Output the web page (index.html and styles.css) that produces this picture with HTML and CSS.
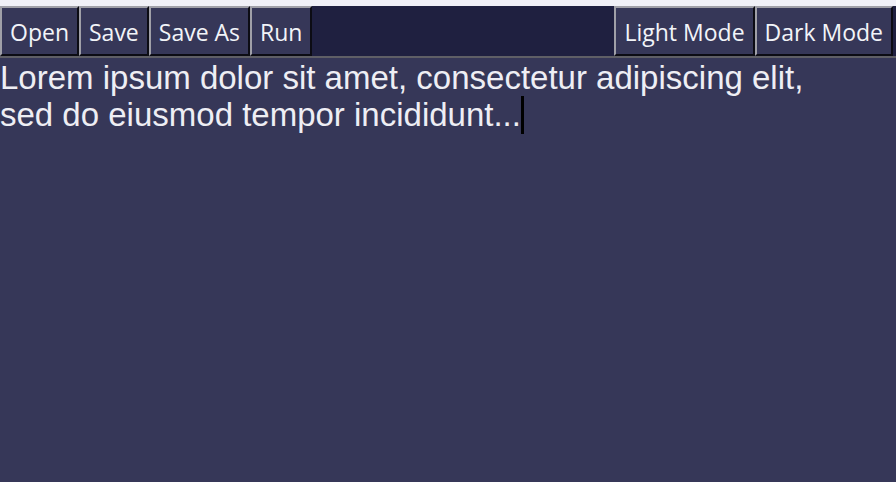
FILE: index.html
```html
<!DOCTYPE html>
<html>
<head>
<meta charset="utf-8">
<link rel="stylesheet" href="styles.css">
</head>
<body>
<div class="topstrip"></div>
<div class="toolbar">
  <button class="btn">Open</button>
  <button class="btn">Save</button>
  <button class="btn">Save As</button>
  <button class="btn">Run</button>
  <div class="spacer"></div>
  <button class="btn">Light Mode</button>
  <button class="btn">Dark Mode</button>
</div>
<div class="editor">
  <div class="line">Lorem ipsum dolor sit amet, consectetur adipiscing elit,</div>
  <div class="line">sed do eiusmod tempor incididunt...<span class="caret"></span></div>
</div>
</body>
</html>
```
FILE: styles.css
```css
html, body {
  margin: 0;
  padding: 0;
  background: #363758;
  height: 100%;
  overflow: hidden;
}
.topstrip {
  height: 6px;
  background: #f0f0f7;
}
.toolbar {
  display: flex;
  background: #1f2040;
  padding-right: 3px;
  border-bottom: 2px solid #5f5f66;
}
.spacer {
  flex: 1;
}
.btn {
  margin: 0;
  height: 50px;
  padding: 2px 8px 0 8px;
  background: #363758;
  color: #f2f4f8;
  font-family: "Open Sans", "Noto Sans", sans-serif;
  font-size: 23px;
  border-style: solid;
  border-width: 2px;
  border-color: #a0a0a8 #0c0c14 #0c0c14 #a0a0a8;
  cursor: default;
}
.editor {
  font-family: "Liberation Sans", Arial, sans-serif;
  font-size: 33px;
  line-height: 37px;
  color: #eeeef4;
  padding-top: 1px;
}
.caret {
  display: inline-block;
  width: 3px;
  height: 38px;
  background: #000;
  vertical-align: top;
}
```
